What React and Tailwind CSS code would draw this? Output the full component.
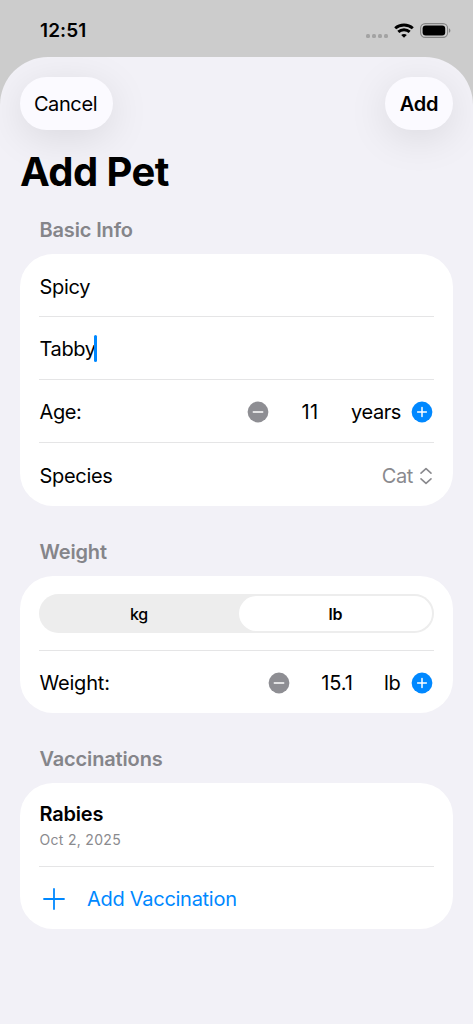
import React from "react";

function StatusBar() {
  return (
    <div className="h-[57px] flex items-center justify-between pl-[40px] pr-[22px] pt-[5px]">
      <div className="text-[19px] font-semibold tracking-[0.1px]">12:51</div>
      <div className="flex items-center">
        <div className="flex gap-[2px] mt-[9px] mr-[6px]">
          <span className="size-[4px] rounded-[1.5px] bg-[#a3a3a3]" />
          <span className="size-[4px] rounded-[1.5px] bg-[#a3a3a3]" />
          <span className="size-[4px] rounded-[1.5px] bg-[#a3a3a3]" />
          <span className="size-[4px] rounded-[1.5px] bg-[#a3a3a3]" />
        </div>
        <svg className="-mt-[2px]" width="20" height="15" viewBox="0 0 20 15" fill="none" stroke="#000" strokeWidth="2.9">
          <path d="M1.2 5.3C6 0.9 14 0.9 18.8 5.3" />
          <path d="M4.3 8.9C7.5 6 12.5 6 15.7 8.9" />
          <path d="M10 14.8L7.2 12C8.8 10.5 11.2 10.5 12.8 12Z" fill="#000" stroke="none" />
        </svg>
        <svg className="ml-[6px] -mt-[2px]" width="31" height="15" viewBox="0 0 31 15">
          <rect x="0.6" y="0.6" width="27" height="13.8" rx="4.6" fill="none" stroke="#858585" strokeWidth="1.1" />
          <rect x="2.6" y="2.5" width="22.6" height="10" rx="3" fill="#000" />
          <path d="M29 5.2C30.9 6 30.9 9 29 9.8Z" fill="#858585" />
        </svg>
      </div>
    </div>
  );
}

function MinusButton() {
  return (
    <button className="shrink-0" aria-label="Decrease">
      <svg width="22" height="22" viewBox="0 0 22 22">
        <circle cx="11" cy="11" r="10.4" fill="#8e8e93" />
        <path d="M6.3 11H15.7" stroke="#fff" strokeWidth="1.5" strokeLinecap="round" />
      </svg>
    </button>
  );
}

function PlusButton() {
  return (
    <button className="shrink-0" aria-label="Increase">
      <svg width="22" height="22" viewBox="0 0 22 22">
        <circle cx="11" cy="11" r="10.4" fill="#0088ff" />
        <path d="M6.6 11H15.4M11 6.6V15.4" stroke="#fff" strokeWidth="1.5" strokeLinecap="round" />
      </svg>
    </button>
  );
}

function Section({ title, children }) {
  return (
    <section className="px-[20px]">
      <h2 className="pl-[19.5px] h-[24px] leading-[24px] text-[20px] font-semibold tracking-[-0.15px] text-[#85858a]">{title}</h2>
      <div className="mt-[12px] rounded-[33px] bg-white overflow-hidden">{children}</div>
    </section>
  );
}

function Divider() {
  return <div className="mx-[19px] h-px bg-[#e5e5e6]" />;
}

export default function App() {
  const [name] = React.useState("Spicy");
  const [breed] = React.useState("Tabby");
  const [age] = React.useState(11);
  const [weight] = React.useState(15.1);

  return (
    <div className="w-[473px] h-[1024px] overflow-hidden bg-[#cccccc] text-black text-[20px] leading-[24px] tracking-[-0.4px] font-['Inter','Liberation_Sans',sans-serif]">
      <StatusBar />
      <main className="h-[967px] rounded-t-[48px] bg-[#f2f1f7] pt-[20px] overflow-hidden">
        <div className="flex justify-between px-[20px]">
          <button className="w-[93px] h-[53px] pr-[2px] rounded-full bg-[#fbfaff] shadow-[0_8px_40px_rgba(0,0,0,0.1)] whitespace-nowrap">Cancel</button>
          <button className="w-[68px] h-[53px] rounded-full bg-[#fbfaff] shadow-[0_8px_40px_rgba(0,0,0,0.1)] font-semibold tracking-[-0.2px]">Add</button>
        </div>
        <h1 className="mt-[18px] mb-[22px] pl-[20px] h-[48px] leading-[48px] text-[40px] font-bold tracking-[-0.6px]">Add Pet</h1>

        <div className="flex flex-col gap-[34px]">
          <Section title="Basic Info">
            <div className="h-[62px] px-[19.5px] flex items-center pt-[3px] tracking-[-0.3px]">{name}</div>
            <Divider />
            <div className="h-[62px] px-[19.5px] pt-[2px] flex items-center">
              <span>{breed}</span>
              <span className="-ml-[1.5px] -mt-[2px] w-[2.5px] h-[27px] rounded-full bg-[#0088ff]" />
            </div>
            <Divider />
            <div className="h-[62px] pl-[19.5px] pr-[20px] pt-[2px] flex items-center">
              <span className="flex-1">Age:</span>
              <MinusButton />
              <span className="w-[82px] text-center tracking-[0.4px]">{age}</span>
              <span className="w-[49px] mr-[11px] text-right">years</span>
              <PlusButton />
            </div>
            <Divider />
            <div className="h-[63px] pl-[19.5px] pr-[20px] pt-[2px] flex items-center justify-between">
              <span className="tracking-[-0.3px]">Species</span>
              <span className="flex items-center text-[#8a8a8e]">
                Cat
                <svg className="ml-[6px]" width="14" height="18" viewBox="0 0 14 18" fill="none" stroke="currentColor" strokeWidth="1.6" strokeLinecap="round" strokeLinejoin="round">
                  <path d="M2 6.2L7 1.6L12 6.2M2 11.8L7 16.4L12 11.8" />
                </svg>
              </span>
            </div>
          </Section>

          <Section title="Weight">
            <div className="h-[74px] px-[19px] pt-[18px]">
              <div className="h-[39px] rounded-full bg-[#ededed] p-[2px] grid grid-cols-[198px_193px] text-[16px] tracking-[-0.2px]">
                <button className="font-medium pr-[2px]">kg</button>
                <button className="rounded-full bg-white font-semibold">lb</button>
              </div>
            </div>
            <Divider />
            <div className="h-[62px] pl-[19.5px] pr-[20px] pt-[2px] flex items-center">
              <span className="flex-1 tracking-[-0.2px]">Weight:</span>
              <MinusButton />
              <span className="w-[94px] text-center tracking-[-0.1px]">{weight}</span>
              <span className="w-[16px] mr-[11px] text-right">lb</span>
              <PlusButton />
            </div>
          </Section>

          <Section title="Vaccinations">
            <div className="h-[83px] px-[19.5px] pt-[19px]">
              <div className="font-semibold tracking-[-0.2px]">Rabies</div>
              <div className="mt-[4px] text-[14px] leading-[20px] tracking-[0.3px] text-[#8a8a8e]">Oct 2, 2025</div>
            </div>
            <Divider />
            <button className="h-[62px] w-full px-[23px] pt-[2px] flex items-center text-[#0088ff]">
              <svg width="22" height="22" viewBox="0 0 22 22" fill="none" stroke="currentColor" strokeWidth="1.8" strokeLinecap="round">
                <path d="M1 11H21M11 1V21" />
              </svg>
              <span className="ml-[22px] tracking-[-0.28px]">Add Vaccination</span>
            </button>
          </Section>
        </div>
      </main>
    </div>
  );
}
